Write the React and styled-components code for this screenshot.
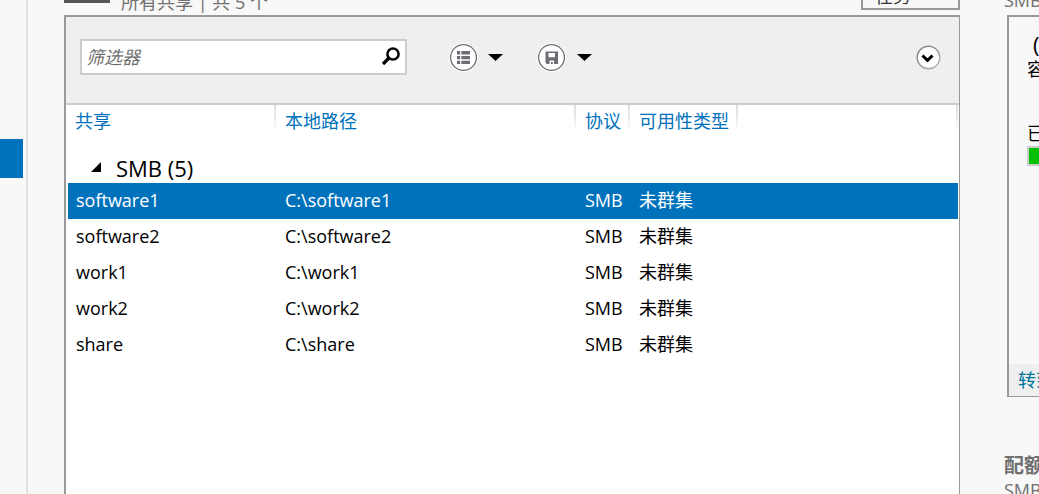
import React from 'react';
import styled, { createGlobalStyle } from 'styled-components';

const BLUE = '#0072bc';

const Global = createGlobalStyle`
  * { box-sizing: border-box; }
  body {
    margin: 0;
    background: #f8f8f8;
    color: #000;
    font: 18px/24px "Open Sans", "Noto Sans CJK SC", sans-serif;
    overflow: hidden;
  }
  button, input { font: inherit; color: inherit; }
`;

const Page = styled.div`
  display: grid;
  grid-template-columns: 28px minmax(0, 1fr) 35px;
  height: 100vh;
  overflow: hidden;
`;

const Nav = styled.nav`
  border-right: 2px solid #e2e2e2;
  padding: 139px 3px 0 0;
`;

const NavItem = styled.a`
  display: block;
  height: 39px;
  background: ${BLUE};
`;

const Main = styled.main`
  display: flex;
  flex-direction: column;
  min-height: 0;
  padding: 0 44px 0 36px;
`;

const Header = styled.header`
  display: flex;
  align-items: flex-end;
  flex: none;
  height: 15px;
  overflow: hidden;
  color: #707070;
  white-space: nowrap;
`;

const Tile = styled.div`
  width: 46px;
  height: 46px;
  margin-bottom: 12px;
  background: #555;
`;

const Subtitle = styled.span`
  margin: 0 auto ${p => p.$bottom}px ${p => p.$left}px;
`;

const TaskButton = styled.button`
  display: flex;
  align-items: center;
  justify-content: space-between;
  width: 99px;
  height: 34px;
  margin-bottom: 5px;
  padding: 6px 12px 0 12px;
  border: 2px solid #999;
  background: #f8f8f8;
  color: #333;
`;

const Panel = styled.section`
  flex: 1;
  min-height: 0;
  border: solid #999;
  border-width: 2px 1px 0 2px;
  background: #fff;
`;

const Toolbar = styled.div`
  display: flex;
  align-items: center;
  height: 88px;
  padding: 0 18px 6px 14px;
  border-bottom: 2px solid #ccc;
  background: #efefef;
`;

const Search = styled.form`
  display: flex;
  align-items: center;
  flex: 0 1 327px;
  height: 36px;
  margin-right: 42px;
  border: 2px solid #ccc;
  background: #fff;
`;

const SearchInput = styled.input`
  flex: 1;
  min-width: 0;
  height: 32px;
  padding: 0 4px;
  border: 0;
  background: transparent;
  font-style: italic;
  &::placeholder { color: #707070; opacity: 1; }
`;

const IconButton = styled.button`
  display: flex;
  align-items: center;
  gap: ${p => p.$gap || 0}px;
  margin: ${p => (p.$end ? '0 0 0 auto' : '0 34px 0 0')};
  padding: 0;
  border: 0;
  background: transparent;
  svg { display: block; }
`;

const Table = styled.table`
  width: calc(100% - 3px);
  margin: 0 1px 0 2px;
  border-collapse: collapse;
  table-layout: fixed;
`;

const Col = styled.col`
  width: ${p => p.$w}px;
`;

const Th = styled.th`
  height: 48px;
  padding: 0 0 0 7px;
  background: linear-gradient(#dcdcdc, #fff) right top / 2px 28px no-repeat;
  color: ${BLUE};
  font-weight: 400;
  line-height: 32px;
  text-align: left;
  vertical-align: top;
  white-space: nowrap;
  & + & { padding-left: 9px; }
`;

const GroupCell = styled.th`
  height: 30px;
  padding: 0 0 0 22px;
  font-size: 22px;
  font-weight: 400;
  line-height: 30px;
  text-align: left;
`;

const GroupToggle = styled.button`
  display: flex;
  align-items: center;
  gap: 14px;
  height: 30px;
  padding: 0;
  border: 0;
  background: transparent;
`;

const Row = styled.tr`
  background: ${p => (p.$selected ? BLUE : 'transparent')};
  color: ${p => (p.$selected ? '#fff' : '#000')};
`;

const Td = styled.td`
  height: 36px;
  padding: 0 0 2px 8px;
  white-space: nowrap;
  & + & { padding-left: 9px; }
`;

const Side = styled.aside`
  min-width: 0;
  overflow: hidden;
  white-space: nowrap;
`;

const Card = styled.section`
  display: flex;
  flex-direction: column;
  width: 320px;
  height: 382px;
  margin-left: 3px;
  border: solid #999;
  border-width: 2px 2px 1px 2px;
`;

const Volume = styled.div`
  flex: 1;
  padding: 14px 17px 0 18px;
`;

const VolumeName = styled.div`
  padding-left: 6px;
  font-size: 22px;
  line-height: 26px;
`;

const Used = styled.div`
  margin-top: 40px;
`;

const Meter = styled.div`
  height: 20px;
  margin-top: 1px;
  border: 2px solid #ccc;
  background: #00c000;
`;

const CardFooter = styled.footer`
  height: 32px;
  padding: 0 9px;
  background: #efefef;
  line-height: 32px;
`;

const Link = styled.a`
  color: #007399;
  text-decoration: none;
`;

const QuotaTitle = styled.h2`
  margin: 57px 0 0;
  color: #707070;
  font-size: 20px;
  line-height: 24px;
`;

const Muted = styled.div`
  color: #707070;
`;

const Caret = () => (
  <svg width="15" height="7" viewBox="0 0 15 7"><path d="M0 0h15L7.5 7z" /></svg>
);

const Magnifier = () => (
  <svg width="24" height="22" viewBox="0 0 24 22" fill="none" stroke="#000">
    <circle cx="12" cy="8" r="5.6" strokeWidth="2.5" />
    <path d="M8 12L2 18" strokeWidth="3.2" />
  </svg>
);

const Disc = ({ children }) => (
  <svg width="29" height="29" viewBox="0 0 29 29">
    <circle cx="14.5" cy="14.5" r="14.4" fill="#fff" />
    <circle cx="14.5" cy="14.5" r="12.9" fill="#fff" stroke="#6d6e75" strokeWidth="1.3" />
    {children}
  </svg>
);

const ListIcon = () => (
  <Disc>
    <path fill="#6d6e75" d="M8 8h3.200v3.400H8zM12.400 8H21v3.400h-8.600zM8 12.900h3.200v3.300H8zM12.400 12.900H21v3.300h-8.600zM8 17.700h3.200V21H8zM12.400 17.700H21V21h-8.600z" />
  </Disc>
);

const SaveIcon = () => (
  <Disc>
    <path fill="#6d6e75" fillRule="evenodd" d="M8.500 8.500H21v12.500H10L8.500 19.500zM11.500 10v4.200h6.500V10zM12.500 17.500v3.500h1.500v-2h1.800v2H17v-3.500z" />
  </Disc>
);

const ExpandIcon = () => (
  <svg width="25" height="25" viewBox="0 0 25 25" fill="none">
    <defs>
      <linearGradient id="rim" x1="0" y1="0" x2="1" y2="1">
        <stop offset="0" stopColor="#777" />
        <stop offset="1" stopColor="#bbb" />
      </linearGradient>
    </defs>
    <circle cx="12.500" cy="12.500" r="11.300" fill="#fff" stroke="url(#rim)" strokeWidth="1.400" />
    <path d="M6.500 10.500l5 4.800 5-4.800" stroke="#000" strokeWidth="3" />
  </svg>
);

const shares = [
  ['software1', 'C:\\software1'],
  ['software2', 'C:\\software2'],
  ['work1', 'C:\\work1'],
  ['work2', 'C:\\work2'],
  ['share', 'C:\\share'],
];

export default function App() {
  return (
    <>
      <Global />
      <Page>
        <Nav><NavItem href="#shares" aria-current="page" /></Nav>
        <Main>
          <Header>
            <Tile />
            <Subtitle $left={11} $bottom={1}>所有共享 | 共 5 个</Subtitle>
            <TaskButton>
              任务
              <svg width="10" height="6" viewBox="0 0 10 6"><path d="M0 0h10L5 5z" fill="#555" /></svg>
            </TaskButton>
          </Header>
          <Panel>
            <Toolbar>
              <Search role="search">
                <SearchInput aria-label="筛选器" placeholder="筛选器" />
                <IconButton type="button" $end aria-label="搜索"><Magnifier /></IconButton>
              </Search>
              <IconButton $gap={10} aria-label="列表"><ListIcon /><Caret /></IconButton>
              <IconButton $gap={11} aria-label="保存"><SaveIcon /><Caret /></IconButton>
              <IconButton $end aria-label="展开"><ExpandIcon /></IconButton>
            </Toolbar>
            <Table>
              <colgroup>
                <Col $w={208} /><Col $w={300} /><Col $w={54} /><Col $w={108} /><col />
              </colgroup>
              <thead>
                <tr>
                  <Th>共享</Th><Th>本地路径</Th><Th>协议</Th><Th>可用性类型</Th><Th />
                </tr>
              </thead>
              <tbody>
                <tr>
                  <GroupCell colSpan={5}>
                    <GroupToggle aria-expanded="true">
                      <svg width="12" height="12" viewBox="0 0 12 12"><path d="M11 0v10H1z" /></svg>
                      SMB (5)
                    </GroupToggle>
                  </GroupCell>
                </tr>
                {shares.map(([name, path], i) => (
                  <Row key={name} $selected={i === 0}>
                    <Td>{name}</Td><Td>{path}</Td><Td>SMB</Td><Td>未群集</Td><Td />
                  </Row>
                ))}
              </tbody>
            </Table>
          </Panel>
        </Main>
        <Side>
          <Header><Subtitle $left={0} $bottom={3}>SMB</Subtitle></Header>
          <Card>
            <Volume>
              <VolumeName>(</VolumeName>
              <div>容</div>
              <Used>已</Used>
              <Meter />
            </Volume>
            <CardFooter><Link href="#volumes">转到</Link></CardFooter>
          </Card>
          <QuotaTitle>配额</QuotaTitle>
          <Muted>SMB</Muted>
        </Side>
      </Page>
    </>
  );
}
